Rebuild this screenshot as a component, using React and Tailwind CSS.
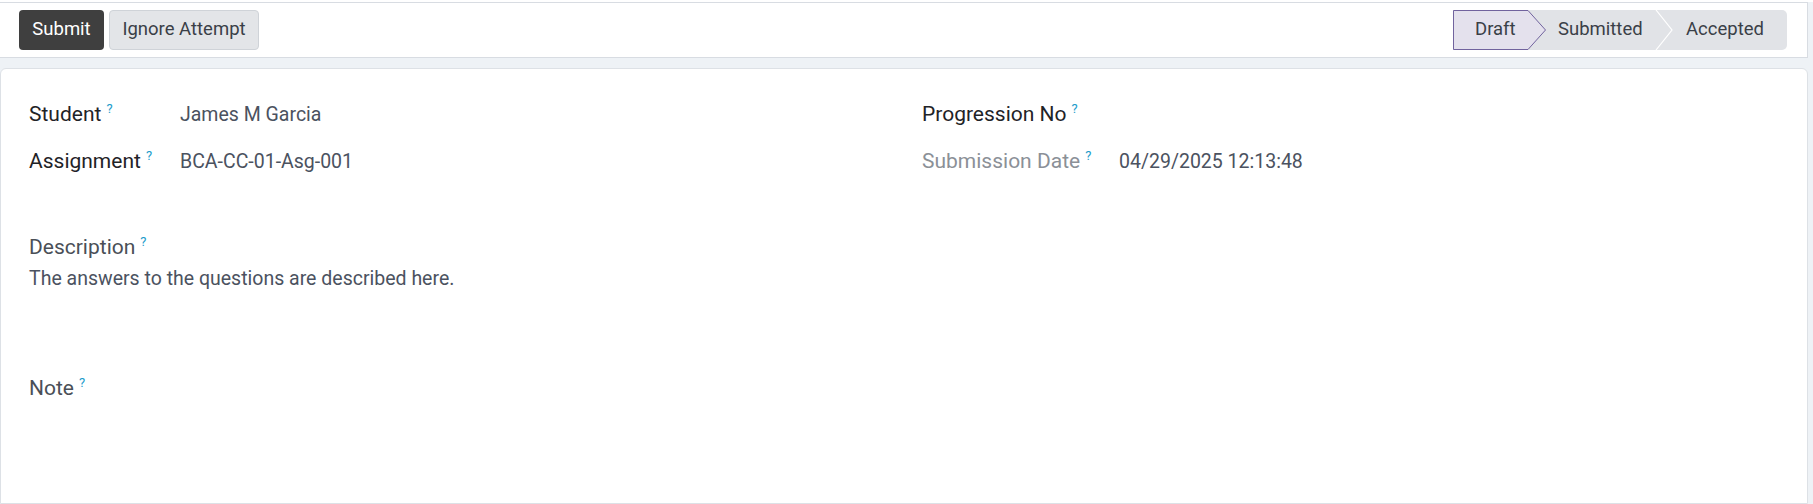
import React from "react";

const QMARK = "relative -top-[8px] ml-[5px] text-[13px] text-[#1b9ccb]";

function Label({ children, tone = "dark" }) {
  const color =
    tone === "dark"
      ? "text-[#1f2327]"
      : tone === "muted"
        ? "text-[#8b9097]"
        : "text-[#4a4f57]";
  return (
    <span className="whitespace-nowrap">
      <span className={`text-[21px] ${color}`}>{children}</span>
      <sup className={QMARK}>?</sup>
    </span>
  );
}

function Field({ label, value, labelWidth, tone }) {
  return (
    <div className="h-[47px] flex items-center">
      <div className="shrink-0" style={{ width: labelWidth }}>
        <Label tone={tone}>{label}</Label>
      </div>
      {value && <div className="text-[19.5px] text-[#4b5260]">{value}</div>}
    </div>
  );
}

function StatusBar() {
  return (
    <div className="flex h-10 bg-[#e1e3e7] rounded-r-[5px] text-[18.5px] text-[#3a3f47]">
      {/* current step */}
      <div className="relative w-[93px] h-full flex items-center pl-[22px]">
        <svg className="absolute inset-0" width="93" height="40" viewBox="0 0 93 40">
          <polygon
            points="0.5,0.5 75,0.5 92.5,20 75,39.5 0.5,39.5"
            fill="#e4e1ed"
            stroke="#71639e"
          />
        </svg>
        <span className="relative">Draft</span>
      </div>
      <div className="relative w-[127px] h-full flex items-center pl-[12px]">
        <span>Submitted</span>
        <svg className="absolute right-0 top-0" width="18" height="40" viewBox="0 0 18 40">
          <polyline points="1,0 17,20 1,40" fill="none" stroke="#ffffff" strokeWidth="1.2" />
        </svg>
      </div>
      <div className="w-[114px] h-full flex items-center pl-[13px]">
        <span>Accepted</span>
      </div>
    </div>
  );
}

export default function App() {
  return (
    <div className="min-h-screen bg-[#eef2f6] font-['Roboto',sans-serif]">
      <div className="h-[2px] bg-white" />

      {/* Action bar */}
      <div className="mr-[5px] h-[56px] bg-white border-t border-b border-r border-[#d8dce2] flex items-center justify-between pl-[19px] pr-[20px]">
        <div className="flex items-center gap-[5px]">
          <button
            type="button"
            className="h-10 w-[85px] rounded-[4px] bg-[#3f3f3f] text-white text-[18.5px]"
          >
            Submit
          </button>
          <button
            type="button"
            className="h-10 w-[150px] rounded-[4px] bg-[#e3e5e8] border border-[#cfd3d8] text-[#3a3f47] text-[18.5px]"
          >
            Ignore Attempt
          </button>
        </div>
        <StatusBar />
      </div>

      {/* Sheet */}
      <div className="mt-[10px] mr-[5px] min-h-[436px] bg-white border border-[#dde1e6] rounded-t-[6px] pl-[28px] pt-[22px]">
        <div className="grid grid-cols-2">
          <div>
            <Field label="Student" value="James M Garcia" labelWidth={151} />
            <Field label="Assignment" value="BCA-CC-01-Asg-001" labelWidth={151} />
          </div>
          <div className="ml-[4px]">
            <Field label="Progression No" labelWidth={197} />
            <Field
              label="Submission Date"
              value="04/29/2025 12:13:48"
              labelWidth={197}
              tone="muted"
            />
          </div>
        </div>

        <div className="mt-[49px]">
          <div className="h-[28px] flex items-center">
            <Label tone="mid">Description</Label>
          </div>
          <div className="mt-[4px] h-[26px] flex items-center text-[19.5px] text-[#4b5260]">
            The answers to the questions are described here.
          </div>
        </div>

        <div className="mt-[83px] h-[28px] flex items-center">
          <Label tone="mid">Note</Label>
        </div>
      </div>
    </div>
  );
}
